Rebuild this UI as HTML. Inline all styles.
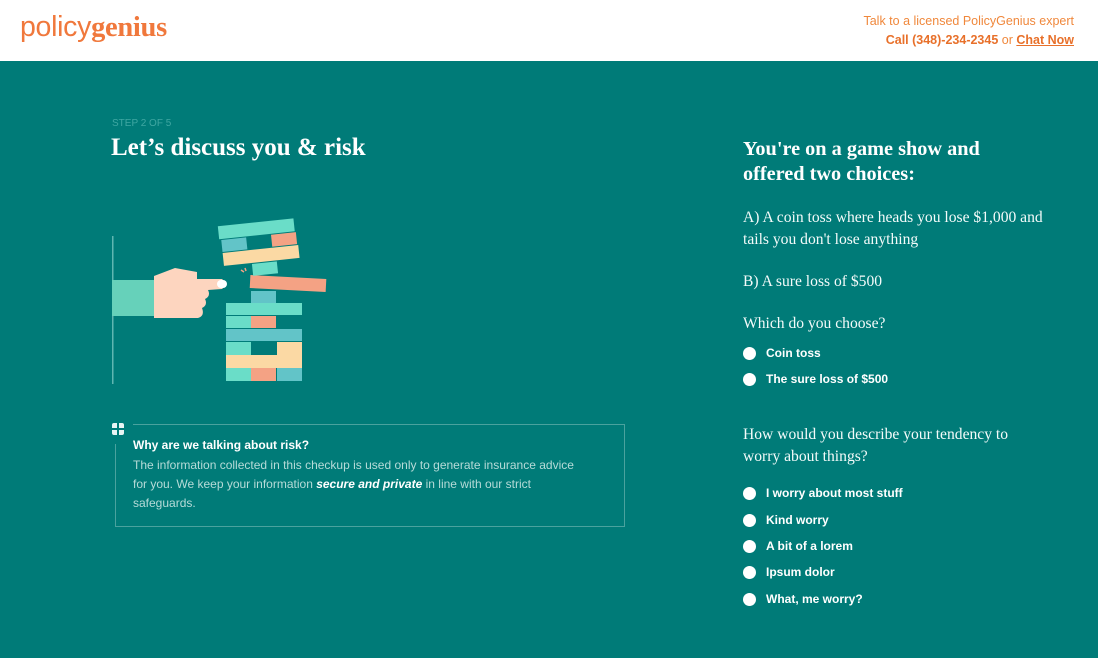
<!DOCTYPE html>
<html><head><meta charset="utf-8"><style>
*{margin:0;padding:0;box-sizing:border-box}
body{width:1098px;height:658px;overflow:hidden;background:#007B78;font-family:"Liberation Sans",sans-serif;position:relative;color:#fff}
.hdr{position:absolute;left:0;top:0;width:1098px;height:61px;background:#fff}
.logo{position:absolute;left:20px;top:11px;font-size:28.5px;color:#F0783C;letter-spacing:-0.3px}
.logo span{font-family:"Liberation Serif",serif;font-weight:bold}
.logo i{font-style:normal;font-weight:300}
.tr{position:absolute;right:24px;top:12px;text-align:right;font-size:12.5px;color:#F0883C;line-height:19px}
.tr b{font-weight:bold;color:#E8702A}
.tr u{font-weight:bold;color:#E8702A}
.serif{font-family:"Liberation Serif",serif}
.a{position:absolute}
.opt{position:absolute;left:743px;font-size:12px;font-weight:bold}
.opt:before{content:"";position:absolute;left:0;top:1px;width:13px;height:13px;border-radius:50%;background:#fff}
.opt span{margin-left:23px}
.q{font-family:"Liberation Serif",serif;font-size:15.6px;line-height:21.5px;color:#f4fbfa}
</style></head><body>
<div class="hdr">
<div class="logo"><i>policy</i><span>genius</span></div>
<div class="tr">Talk to a licensed PolicyGenius expert<br><b>Call (348)-234-2345</b> or <u>Chat Now</u></div>
</div>
<div class="a" style="left:112px;top:118px;font-size:10px;color:#3fa7a2">STEP 2 OF 5</div>
<div class="a serif" style="left:111px;top:134px;font-size:25px;font-weight:bold">Let’s discuss you &amp; risk</div>
<svg class="a" style="left:0;top:0" width="400" height="400">
<rect x="112" y="236" width="1.5" height="148" fill="#5fb6b1"/>
<rect x="112" y="280" width="43" height="36" fill="#66D1BA"/>
<path d="M154 276 L175 268 L197 272 L197 279 L222 279 Q228 284 222 289 L208 290 Q211 296 205 299 Q208 305 202 308 Q205 316 198 318 L154 318 Z" fill="#FDD5BF"/>
<rect x="217" y="280" width="10" height="8" rx="4" fill="#fff"/>
<rect x="251" y="291" width="25" height="13" fill="#62C4C8"/>
<rect x="226" y="303" width="76" height="12" fill="#6ADDC8"/>
<rect x="226" y="316" width="25" height="12" fill="#6ADDC8"/><rect x="251" y="316" width="25" height="12" fill="#F4A284"/>
<rect x="226" y="329" width="76" height="12" fill="#62C4C8"/>
<rect x="226" y="342" width="25" height="13" fill="#6ADDC8"/><rect x="277" y="342" width="25" height="13" fill="#FBD9A4"/>
<rect x="226" y="355" width="76" height="13" fill="#FBD9A4"/>
<rect x="226" y="368" width="25" height="13" fill="#6ADDC8"/><rect x="251" y="368" width="25" height="13" fill="#F4A284"/><rect x="277" y="368" width="25" height="13" fill="#62C4C8"/>
<g transform="rotate(3 288 284)"><rect x="250" y="277" width="76" height="13" fill="#F4A284"/></g>
<g transform="rotate(-6 260 245)">
<rect x="220" y="222" width="76" height="13" fill="#6ADDC8"/>
<rect x="222" y="236" width="25" height="12" fill="#62C4C8"/>
<rect x="272" y="236" width="25" height="12" fill="#F4A284"/>
<rect x="222" y="249" width="76" height="13" fill="#FBD9A4"/>
<rect x="250" y="263" width="25" height="12" fill="#6ADDC8"/>
</g>
<path d="M241 270 l3 2 M245 268 l1 3" stroke="#F4A284" stroke-width="1.5"/>
</svg>
<div class="a" style="left:133px;top:424px;width:492px;height:1px;background:#4aa29e"></div>
<div class="a" style="left:115px;top:444px;width:1px;height:83px;background:#4aa29e"></div>
<div class="a" style="left:115px;top:526px;width:510px;height:1px;background:#4aa29e"></div>
<div class="a" style="left:624px;top:424px;width:1px;height:103px;background:#4aa29e"></div>
<div class="a" style="left:112px;top:423px;width:12px;height:12px;border-radius:2px;background:#e8f4f3"></div>
<div class="a" style="left:117px;top:423px;width:1.5px;height:12px;background:#007B78"></div>
<div class="a" style="left:112px;top:428px;width:12px;height:1.5px;background:#007B78"></div>
<div class="a" style="left:133px;top:438px;font-size:12px;font-weight:bold">Why are we talking about risk?</div>
<div class="a" style="left:133px;top:456px;width:480px;font-size:12px;line-height:19px;color:#b6dbd8;white-space:nowrap">The information collected in this checkup is used only to generate insurance advice<br>for you. We keep your information <b style="color:#fff;font-style:italic">secure and private</b> in line with our strict<br>safeguards.</div>
<div class="a serif" style="left:743px;top:137px;font-size:20.3px;font-weight:bold;line-height:25px">You're on a game show and<br>offered two choices:</div>
<div class="a q" style="left:743px;top:207px">A) A coin toss where heads you lose $1,000 and<br>tails you don't lose anything</div>
<div class="a q" style="left:743px;top:271px">B) A sure loss of $500</div>
<div class="a q" style="left:743px;top:313px">Which do you choose?</div>
<div class="opt" style="top:346px"><span>Coin toss</span></div>
<div class="opt" style="top:372px"><span>The sure loss of $500</span></div>
<div class="a q" style="left:743px;top:424px">How would you describe your tendency to<br>worry about things?</div>
<div class="opt" style="top:486px"><span>I worry about most stuff</span></div>
<div class="opt" style="top:513px"><span>Kind worry</span></div>
<div class="opt" style="top:539px"><span>A bit of a lorem</span></div>
<div class="opt" style="top:565px"><span>Ipsum dolor</span></div>
<div class="opt" style="top:592px"><span>What, me worry?</span></div>
</body></html>
